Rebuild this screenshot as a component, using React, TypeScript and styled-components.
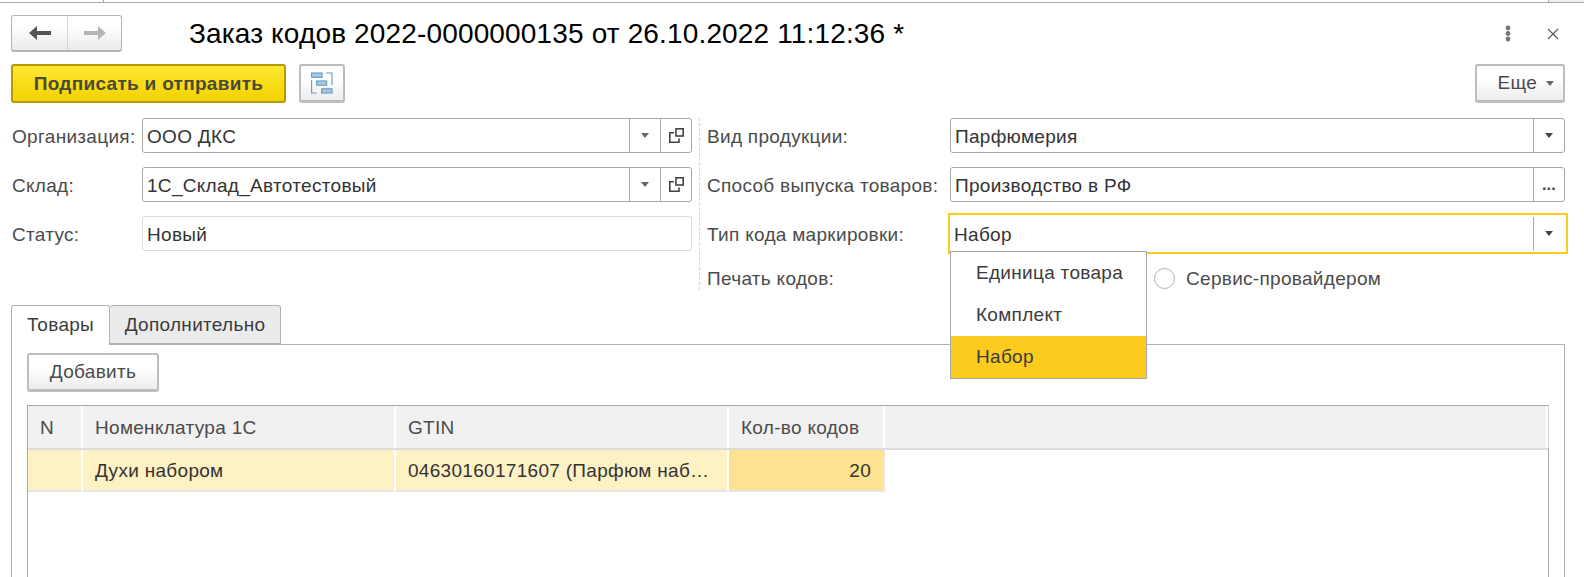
import styled, { createGlobalStyle } from "styled-components";

const GlobalStyle = createGlobalStyle`
  html, body {
    margin: 0;
    padding: 0;
    background: #fff;
    overflow: hidden;
  }
  body {
    font-family: "Liberation Sans", Arial, sans-serif;
    font-size: 19px;
    letter-spacing: 0.3px;
    color: #4b4b4b;
  }
`;

const Page = styled.div`
  width: 1584px;
  height: 577px;
  overflow: hidden;
  box-sizing: border-box;
  position: relative;
`;
const TopStrip = styled.div`
  display: flex;
  height: 3px;
  box-sizing: border-box;
  border-bottom: 1px solid #a8a8a8;
`;
const StripTab = styled.div<{ $width?: number; $light?: boolean }>`
  flex: ${(p) => (p.$width ? `0 0 ${p.$width}px` : "1")};
  box-sizing: border-box;
  border-right: ${(p) => (p.$light ? "none" : "1px solid #a8a8a8")};
  background: ${(p) => (p.$light ? "#f0f0f0" : "#fff")};
`;
const Content = styled.div`
  padding: 12px 19px 0 11px;
`;
const TitleBar = styled.div`
  display: flex;
  align-items: center;
  height: 37px;
`;
const NavGroup = styled.div`
  display: flex;
  width: 111px;
  height: 37px;
  box-sizing: border-box;
  border: 1px solid #b5b5b5;
  border-bottom-width: 2px;
  border-radius: 3px;
  background: linear-gradient(#fff 30%, #eaeaea);
`;
const NavButton = styled.div<{ $first?: boolean }>`
  flex: ${(p) => (p.$first ? "0 0 56px" : "1")};
  box-sizing: border-box;
  display: flex;
  align-items: center;
  justify-content: center;
  border-right: ${(p) => (p.$first ? "1px solid #d6d6d6" : "none")};
`;
const Title = styled.h1`
  margin: 0 0 0 67px;
  font-size: 28px;
  font-weight: 400;
  letter-spacing: 0.15px;
  color: #000;
  white-space: nowrap;
`;
const TitleIcons = styled.div`
  margin-left: auto;
  display: flex;
  align-items: center;
  gap: 36px;
  padding-right: 6px;
`;
const CommandBar = styled.div`
  display: flex;
  align-items: center;
  margin-top: 12px;
  height: 39px;
`;
const PrimaryButton = styled.div`
  width: 275px;
  height: 39px;
  box-sizing: border-box;
  border: 2px solid #b39b00;
  border-radius: 3px;
  background: linear-gradient(#ffe733, #f2d200);
  color: #4a4a35;
  font-weight: 700;
  display: flex;
  align-items: center;
  justify-content: center;
`;
const IconButton = styled.div`
  margin-left: 13px;
  width: 46px;
  height: 39px;
  box-sizing: border-box;
  border: 2px solid #bdbdbd;
  border-bottom-width: 3px;
  border-radius: 3px;
  background: linear-gradient(#fff 40%, #ececec);
  display: flex;
  align-items: center;
  justify-content: center;
`;
const MoreButton = styled.div`
  margin-left: auto;
  width: 90px;
  height: 39px;
  box-sizing: border-box;
  border: 2px solid #bdbdbd;
  border-bottom-width: 3px;
  border-radius: 3px;
  background: linear-gradient(#fff 40%, #ececec);
  display: flex;
  align-items: center;
  justify-content: flex-end;
  gap: 9px;
  padding-right: 9px;
`;
const Caret = styled.span<{ $dark?: boolean }>`
  width: 0;
  height: 0;
  border-left: 4px solid transparent;
  border-right: 4px solid transparent;
  border-top: 5px solid ${(p) => (p.$dark ? "#444" : "#666")};
`;
const FormColumns = styled.div`
  display: flex;
  margin-top: 15px;
`;
const LeftColumn = styled.div`
  width: 681px;
  display: flex;
  flex-direction: column;
  gap: 14px;
`;
const RightColumn = styled.div`
  flex: 1;
  margin-left: 7px;
  border-left: 1px dashed #d4d4d4;
  padding-left: 7px;
  display: flex;
  flex-direction: column;
  gap: 14px;
  height: 172px;
`;
const Row = styled.div<{ $short?: boolean }>`
  display: flex;
  align-items: center;
  height: ${(p) => (p.$short ? "28px" : "35px")};
`;
const Label = styled.label<{ $width: number }>`
  width: ${(p) => p.$width}px;
  flex: none;
  box-sizing: border-box;
  padding: 2px 0 0 1px;
  white-space: nowrap;
`;
const RightLabel = styled(Label)`
  padding-left: 0;
`;
const Field = styled.div<{ $muted?: boolean; $focused?: boolean }>`
  flex: 1;
  display: flex;
  align-items: stretch;
  box-sizing: border-box;
  height: 35px;
  border: 1px solid ${(p) => (p.$muted ? "#dcdcdc" : "#a8a8a8")};
  border-radius: 3px;
  background: #fff;
  ${(p) =>
    p.$focused &&
    `
    height: 41px;
    margin: -3px -3px -3px -2px;
    border: 2px solid #fccb1e;
    border-radius: 0;
    padding: 2px 2px 2px 0;
  `}
`;
const FieldText = styled.div`
  flex: 1;
  padding-left: 4px;
  line-height: 35px;
  color: #333;
  white-space: nowrap;
  overflow: hidden;
`;
const FieldButton = styled.div`
  width: 31px;
  flex: none;
  box-sizing: border-box;
  border-left: 1px solid #a8a8a8;
  display: flex;
  align-items: center;
  justify-content: center;
  color: #444;
  font-size: 16px;
  font-weight: 700;
`;
const RadioRow = styled.div`
  display: flex;
  align-items: center;
  margin-left: 204px;
  gap: 11px;
  padding-top: 2px;
`;
const Radio = styled.span`
  width: 21px;
  height: 21px;
  box-sizing: border-box;
  border: 1px solid #b0b0b0;
  border-radius: 50%;
  background: #fff;
`;
const Dropdown = styled.div`
  position: absolute;
  left: 950px;
  top: 251px;
  width: 197px;
  box-sizing: border-box;
  border: 1px solid #a8a8a8;
  background: #fff;
  z-index: 2;
`;
const DropdownItem = styled.div<{ $active?: boolean }>`
  height: 42px;
  line-height: 42px;
  padding-left: 25px;
  color: #3c3c3c;
  background: ${(p) => (p.$active ? "#fbcb1e" : "#fff")};
`;
const TabStrip = styled.div`
  display: flex;
  margin-top: 15px;
  height: 39px;
  position: relative;
  z-index: 1;
`;
const Tab = styled.div<{ $active?: boolean; $width: number }>`
  width: ${(p) => p.$width}px;
  box-sizing: border-box;
  height: ${(p) => (p.$active ? "40px" : "39px")};
  border: 1px solid #b0b0b0;
  border-bottom: ${(p) => (p.$active ? "none" : "1px solid #b0b0b0")};
  border-left-width: ${(p) => (p.$active ? "1px" : "0")};
  border-radius: 3px 3px 0 0;
  background: ${(p) => (p.$active ? "#fff" : "#ebebeb")};
  color: #3c3c3c;
  line-height: 38px;
  text-align: center;
`;
const TabPanel = styled.div`
  height: 240px;
  box-sizing: border-box;
  border: 1px solid #b0b0b0;
  border-bottom: none;
  padding: 8px 15px 0;
`;
const AddButton = styled.div`
  width: 132px;
  height: 39px;
  box-sizing: border-box;
  border: 2px solid #bdbdbd;
  border-bottom-width: 3px;
  border-radius: 3px;
  background: linear-gradient(#fff 40%, #ececec);
  display: flex;
  align-items: center;
  justify-content: center;
`;
const Table = styled.div`
  margin-top: 13px;
  height: 200px;
  border: 1px solid #a8a8a8;
  border-bottom: none;
`;
const HeadRow = styled.div`
  display: flex;
  height: 44px;
  box-sizing: border-box;
  border-bottom: 2px solid #dcdcdc;
`;
const HeadCell = styled.div<{ $width?: number }>`
  flex: ${(p) => (p.$width ? `0 0 ${p.$width}px` : "1")};
  box-sizing: border-box;
  padding: 0 12px;
  line-height: 44px;
  height: 42px;
  white-space: nowrap;
  background: #f1f1f1;
  border-right: 2px solid #fff;
  box-shadow: 1px 0 0 #d4d4d4;
`;
const BodyRow = styled.div`
  display: flex;
  height: 42px;
`;
const BodyCell = styled.div<{ $width: number; $current?: boolean }>`
  flex: 0 0 ${(p) => p.$width}px;
  box-sizing: border-box;
  padding: 0 12px;
  line-height: 41px;
  white-space: nowrap;
  color: #333;
  text-align: ${(p) => (p.$current ? "right" : "left")};
  background: ${(p) => (p.$current ? "#fee28f" : "#fef1c4")};
  border-right: 2px solid ${(p) => (p.$current ? "#e6e6e6" : "#fff")};
  border-bottom: 2px solid #e6e6e6;
`;

const NavArrow = ({ color, flip }: { color: string; flip?: boolean }) => (
  <svg width="22" height="14" viewBox="0 0 22 14" style={flip ? { transform: "scaleX(-1)" } : undefined}>
    <path d="M8 0 0 7l8 7V9h14V5H8z" fill={color} />
  </svg>
);

const StructureIcon = () => (
  <svg width="22" height="22" viewBox="0 0 22 22" fill="#a9c8e0" stroke="#6aa0c8" strokeWidth="1.2">
    <rect x="0.6" y="1" width="10.4" height="4.4" />
    <rect x="5.6" y="9" width="10" height="4.2" />
    <rect x="10.6" y="16.8" width="10.4" height="4.2" />
    <path d="M0.6 8v13h5M15 1h6v12" fill="none" />
  </svg>
);

const OpenIcon = () => (
  <svg width="15" height="15" viewBox="0 0 15 15" fill="none" stroke="#444" strokeWidth="1.6">
    <rect x="7" y="0.8" width="7.2" height="7.2" />
    <path d="M5 4.8H0.8v9.4H10V10.5" />
  </svg>
);

const App = () => (
  <>
    <GlobalStyle />
    <Page>
      <TopStrip>
        <StripTab $width={104} />
        <StripTab $width={1445} />
        <StripTab $light />
      </TopStrip>
      <Content>
        <TitleBar>
          <NavGroup>
            <NavButton $first>
              <NavArrow color="#555" />
            </NavButton>
            <NavButton>
              <NavArrow color="#b4b4b4" flip />
            </NavButton>
          </NavGroup>
          <Title>Заказ кодов 2022-0000000135 от 26.10.2022 11:12:36 *</Title>
          <TitleIcons>
            <svg width="6" height="17" viewBox="0 0 6 17" fill="#777">
              <circle cx="3" cy="3" r="2.4" />
              <circle cx="3" cy="8.5" r="2.4" />
              <circle cx="3" cy="14" r="2.4" />
            </svg>
            <svg width="12" height="12" viewBox="0 0 12 12" stroke="#555" strokeWidth="1.1">
              <path d="M1 1l10 10M11 1 1 11" />
            </svg>
          </TitleIcons>
        </TitleBar>
        <CommandBar>
          <PrimaryButton>Подписать и отправить</PrimaryButton>
          <IconButton>
            <StructureIcon />
          </IconButton>
          <MoreButton>
            Еще <Caret />
          </MoreButton>
        </CommandBar>
        <FormColumns>
          <LeftColumn>
            <Row>
              <Label $width={131}>Организация:</Label>
              <Field>
                <FieldText>ООО ДКС</FieldText>
                <FieldButton>
                  <Caret />
                </FieldButton>
                <FieldButton>
                  <OpenIcon />
                </FieldButton>
              </Field>
            </Row>
            <Row>
              <Label $width={131}>Склад:</Label>
              <Field>
                <FieldText>1С_Склад_Автотестовый</FieldText>
                <FieldButton>
                  <Caret />
                </FieldButton>
                <FieldButton>
                  <OpenIcon />
                </FieldButton>
              </Field>
            </Row>
            <Row>
              <Label $width={131}>Статус:</Label>
              <Field $muted>
                <FieldText>Новый</FieldText>
              </Field>
            </Row>
          </LeftColumn>
          <RightColumn>
            <Row>
              <RightLabel $width={243}>Вид продукции:</RightLabel>
              <Field>
                <FieldText>Парфюмерия</FieldText>
                <FieldButton>
                  <Caret $dark />
                </FieldButton>
              </Field>
            </Row>
            <Row>
              <RightLabel $width={243}>Способ выпуска товаров:</RightLabel>
              <Field>
                <FieldText>Производство в РФ</FieldText>
                <FieldButton>...</FieldButton>
              </Field>
            </Row>
            <Row>
              <RightLabel $width={243}>Тип кода маркировки:</RightLabel>
              <Field $focused>
                <FieldText>Набор</FieldText>
                <FieldButton>
                  <Caret $dark />
                </FieldButton>
              </Field>
            </Row>
            <Row $short>
              <RightLabel $width={243}>Печать кодов:</RightLabel>
              <RadioRow>
                <Radio />
                Сервис-провайдером
              </RadioRow>
            </Row>
          </RightColumn>
        </FormColumns>
        <Dropdown>
          <DropdownItem>Единица товара</DropdownItem>
          <DropdownItem>Комплект</DropdownItem>
          <DropdownItem $active>Набор</DropdownItem>
        </Dropdown>
        <TabStrip>
          <Tab $active $width={99}>Товары</Tab>
          <Tab $width={171}>Дополнительно</Tab>
        </TabStrip>
        <TabPanel>
          <AddButton>Добавить</AddButton>
          <Table>
            <HeadRow>
              <HeadCell $width={55}>N</HeadCell>
              <HeadCell $width={313}>Номенклатура 1С</HeadCell>
              <HeadCell $width={333}>GTIN</HeadCell>
              <HeadCell $width={156}>Кол-во кодов</HeadCell>
              <HeadCell />
            </HeadRow>
            <BodyRow>
              <BodyCell $width={55} />
              <BodyCell $width={313}>Духи набором</BodyCell>
              <BodyCell $width={333}>04630160171607 (Парфюм наб…</BodyCell>
              <BodyCell $width={156} $current>20</BodyCell>
            </BodyRow>
          </Table>
        </TabPanel>
      </Content>
    </Page>
  </>
);

export default App;
